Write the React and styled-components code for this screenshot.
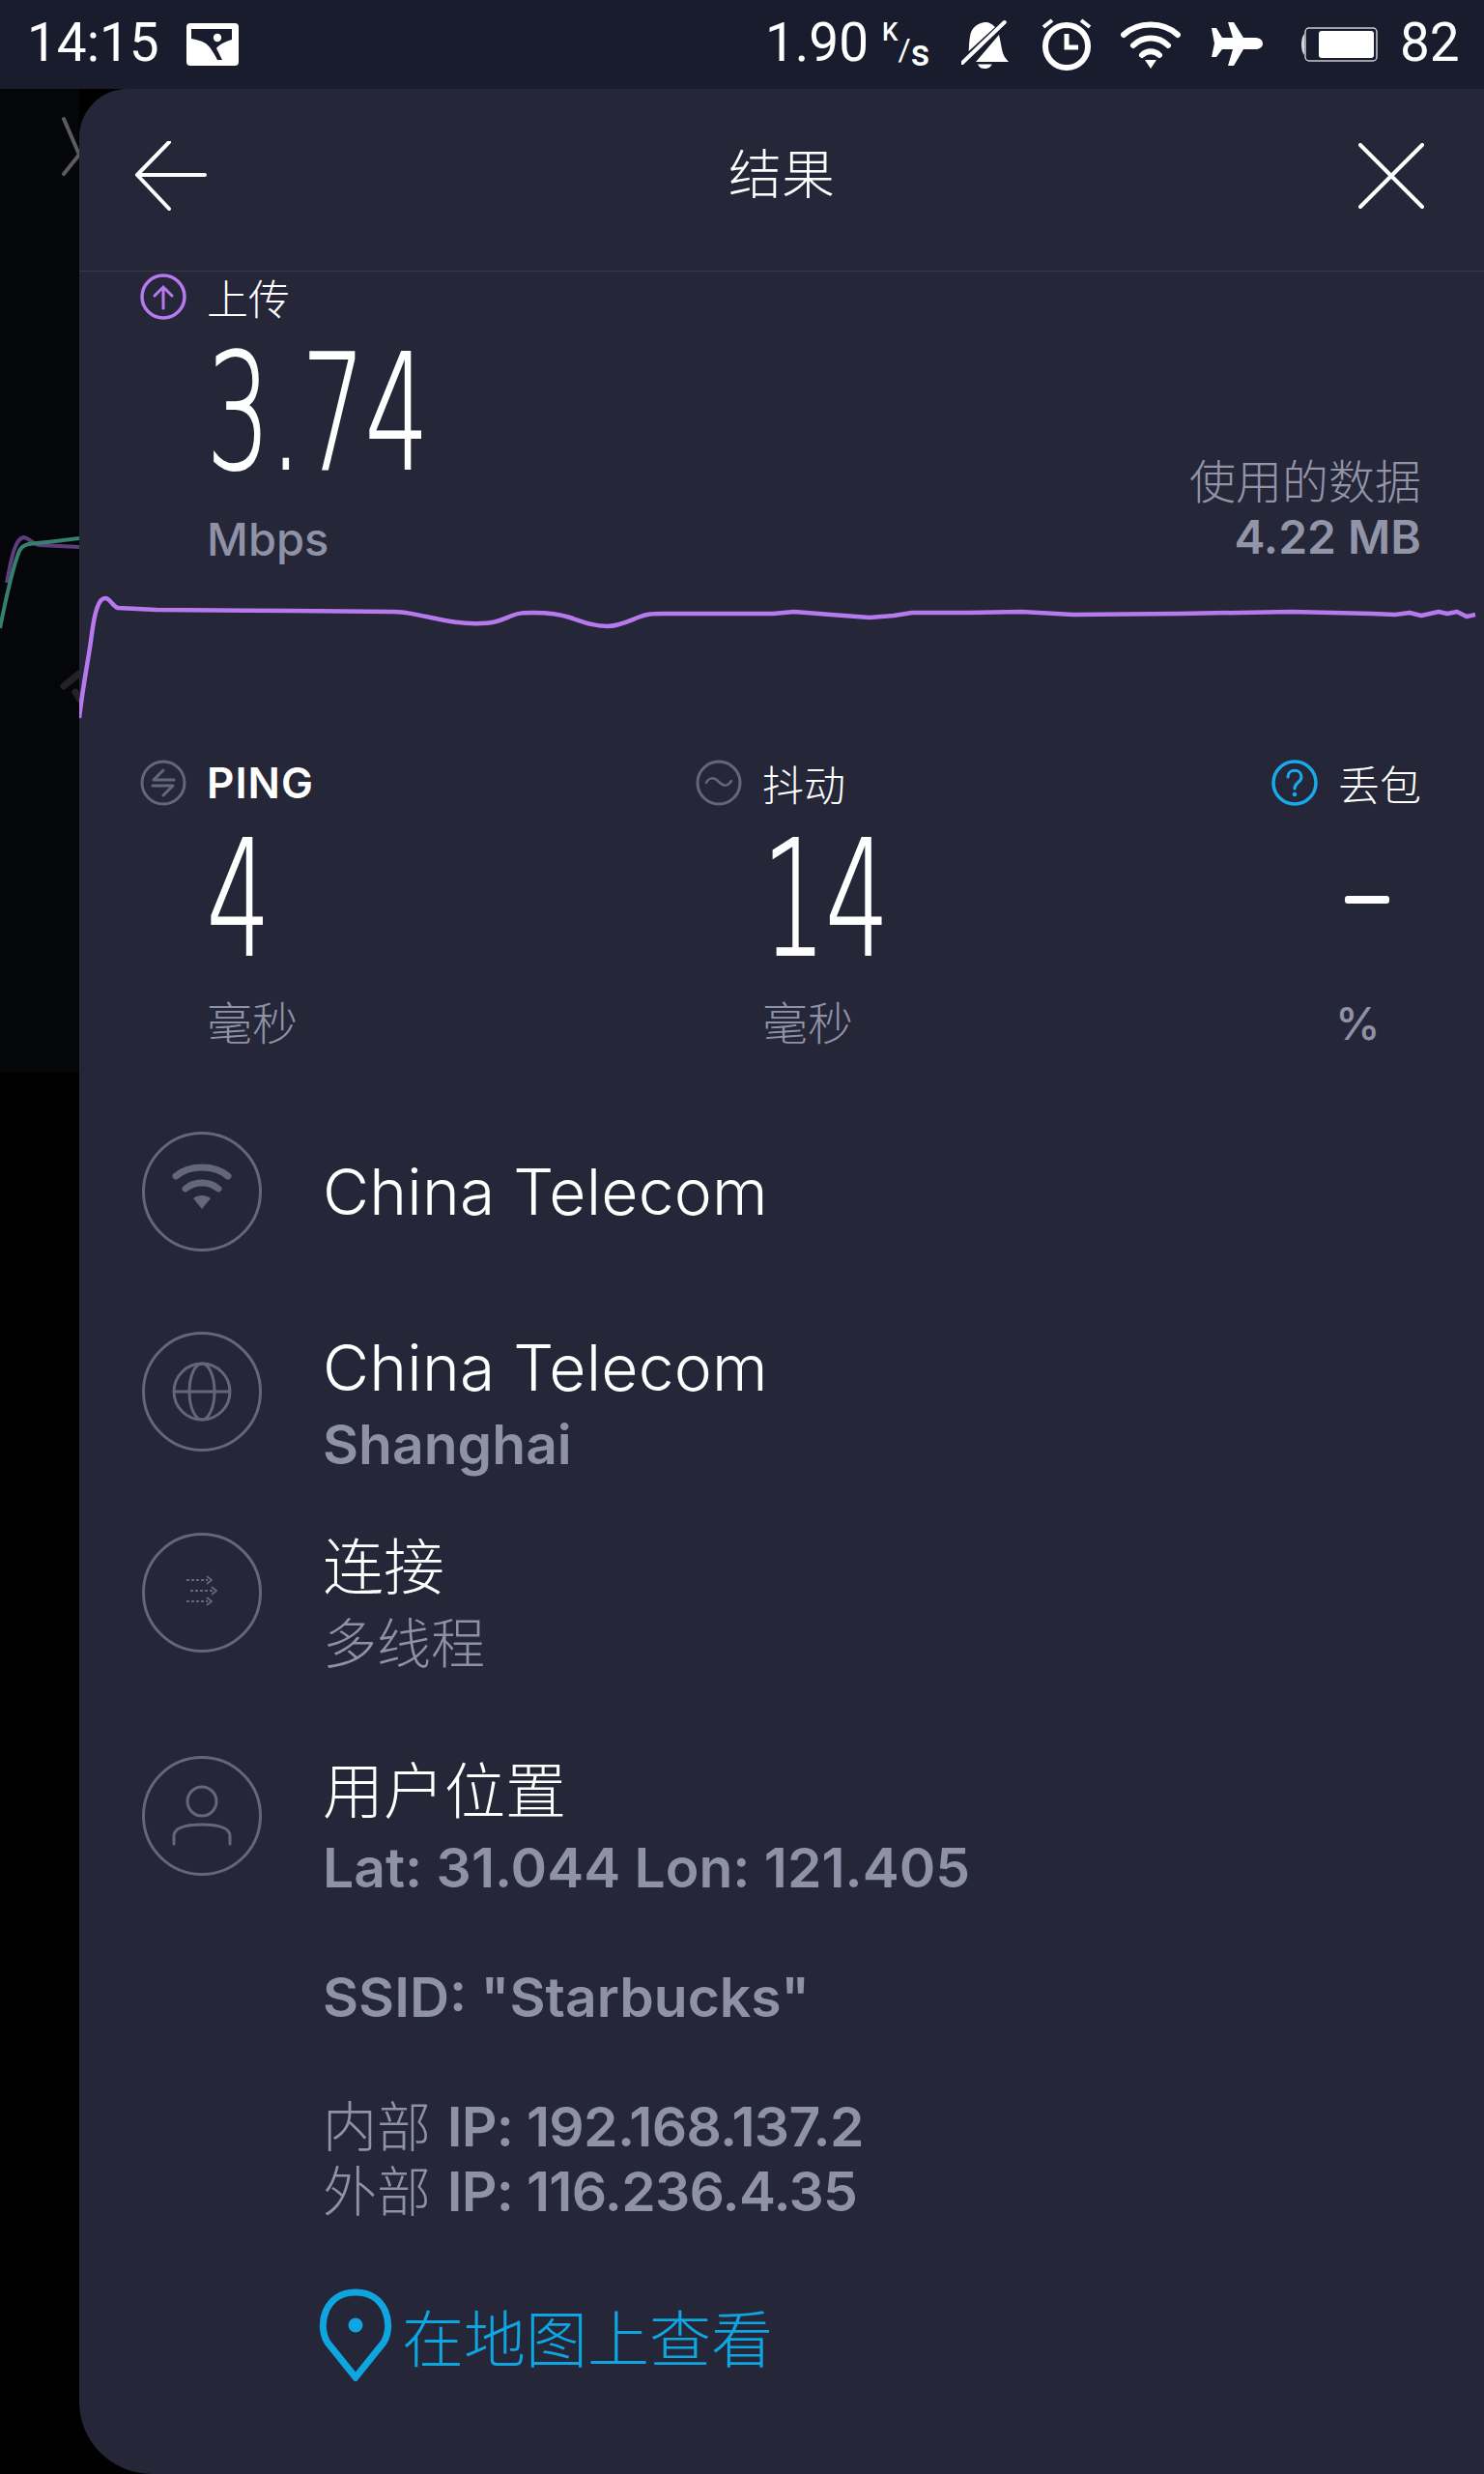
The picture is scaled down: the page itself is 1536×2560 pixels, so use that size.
import React from 'react';
import styled, { createGlobalStyle } from 'styled-components';

const Global = createGlobalStyle`
  html, body { margin: 0; padding: 0; background: #000; }
  * { box-sizing: border-box; }
`;
const CJK = `"Noto Sans CJK SC", sans-serif`;
const LATIN = `Inter, "Noto Sans CJK SC", sans-serif`;

const Screen = styled.div`
  width: 1536px; height: 2560px; overflow: hidden; background: #000;
  display: flex; flex-direction: column; color: #fff;
`;
const StatusBar = styled.div`
  height: 92px; flex: none; background: #191c2c;
  display: flex; align-items: center; padding: 0 27px 0 28px;
`;
const StatusText = styled.span`
  font: 400 56px/1 Roboto, sans-serif; color: #fff; display: inline-block;
  transform: scaleX(${p => p.$sx || 0.95}); transform-origin: left center;
  width: ${p => p.$w}px; white-space: nowrap; flex: none; margin-top: -4px;
`;
const StatusSlot = styled.div`
  flex: none; margin-left: ${p => p.$ml || 0}px; display: flex; align-items: center;
`;
const Spacer = styled.div` flex: 1; `;
const Rate = styled.div`
  display: flex; width: 50px; height: 42px; flex: none; margin: 0 0 3px 17px;
  font-family: Roboto, sans-serif; color: #fff;
`;
const RateK = styled.span` font-size: 26px; font-weight: 500; line-height: 18px; align-self: flex-start; `;
const RateSlash = styled.span` font-size: 32px; font-weight: 400; line-height: 32px; align-self: center; margin-top: 12px; `;
const RateS = styled.span` font-size: 38px; font-weight: 500; line-height: 22px; align-self: flex-end; `;
const Main = styled.div` flex: 1; display: flex; min-height: 0; background: #000; `;
const Strip = styled.div`
  width: 82px; flex: none; position: relative; height: 1018px; background: #050609;
`;
const GhostArt = styled.svg` position: absolute; left: 0; top: 0; `;
const Panel = styled.div`
  flex: 1; background: #252638; border-radius: 50px 0 0 75px; display: flex; flex-direction: column;
`;
const Header = styled.div`
  height: 189px; flex: none; border-bottom: 1px solid #373949; display: flex; align-items: center;
  justify-content: space-between; padding: 0 62px 9px 58px;
`;
const Title = styled.div`
  font: 300 55px/1 ${CJK}; color: #fff; margin: -10px 0 0 -2px;
`;
const Upload = styled.div`
  height: 505px; flex: none; display: flex; justify-content: space-between; padding: 2px 65px 0 63px;
`;
const SmallRow = styled.div`
  display: flex; align-items: center; gap: 21px; height: 48px;
`;
const Label = styled.span`
  font: ${p => (p.$latin ? `600 44px/1 ${LATIN}` : `300 43px/1 ${CJK}`)}; color: #fff; white-space: nowrap;
  letter-spacing: ${p => (p.$latin ? '1px' : '0')};
`;
const Big = styled.div`
  font: 200 165px/1 "DejaVu Sans", sans-serif; color: #fff; transform: scaleX(0.625); transform-origin: left center;
  -webkit-text-stroke: 2px #fff;
  height: 148px; display: flex; align-items: center; white-space: nowrap; margin: 23px 0 0 ${p => p.$ml || 69}px;
`;
const Unit = styled.div`
  font: ${p => (p.$cjk ? `300 47px/1 ${CJK}` : `500 47px/1 ${LATIN}`)}; color: #8f92a6; margin-left: ${p => p.$ml ?? 69}px;
  margin-top: ${p => p.$mt || 0}px; white-space: nowrap;
`;
const DataUsed = styled.div`
  margin-top: 184px; text-align: right; color: #9295a8;
`;
const DataLabel = styled.div` font: 300 48px/56px ${CJK}; `;
const DataValue = styled.div` font: 600 48px/56px ${LATIN}; margin-top: 5px; `;
const Chart = styled.svg` display: block; position: absolute; left: 0; top: 0; `;
const ChartLayer = styled.div` position: relative; height: 0; `;
const Metrics = styled.div`
  display: grid; grid-template-columns: 575px 1fr auto; padding: 0 65px 0 63px; flex: none; height: 385px;
`;
const Metric = styled.div` display: flex; flex-direction: column; `;
const Dash = styled.div`
  width: 46px; height: 8px; border-radius: 3px; background: #fff; margin: 93px 0 100px 76px;
`;
const List = styled.div` padding-left: 65px; `;
const Row = styled.div`
  display: flex; gap: 63px; height: ${p => p.$h}px; align-items: flex-start;
`;
const Circle = styled.div`
  width: 124px; height: 124px; border-radius: 50%; border: 3px solid #64677a; flex: none;
  display: flex; align-items: center; justify-content: center;
`;
const Texts = styled.div` padding-top: ${p => p.$pt || 0}px; `;
const RowTitle = styled.div`
  font: ${p => (p.$cjk ? `300 63px/60px ${CJK}` : `300 66px/66px ${LATIN}`)}; color: #fff; white-space: nowrap;
  margin-bottom: ${p => (p.$cjk ? 3 : 0)}px; letter-spacing: ${p => (p.$cjk ? 0 : 0.2)}px;
`;
const RowSub = styled.div`
  font: ${p => (p.$cjk ? `300 56px/66px ${CJK}` : `600 57px/66px ${LATIN}`)}; color: #8f92a6;
  margin-top: ${p => (p.$cjk ? 17 : 14)}px; white-space: nowrap;
`;
const InfoGroup = styled.div` margin-top: ${p => p.$mt}px; `;
const InfoLine = styled.div`
  font: 600 57px/67px ${LATIN}; color: #8f92a6; white-space: nowrap; height: 67px;
  letter-spacing: ${p => (p.$tight ? -0.7 : 0)}px;
`;
const Thin = styled.span` font: 300 56px/1 ${CJK}; margin-right: 3px; letter-spacing: 0; `;
const MapLink = styled.div`
  display: flex; align-items: center; gap: 10px; margin: 67px 0 0 -4px; color: #0ea5e0;
  font: 300 64px/95px ${CJK}; white-space: nowrap;
`;

const chart = "M82 742 C87 700 92 680 95 655 C98 632 102 618 109 618 C114 618 116 626 122 628 L162 630 L300 631 L407 632 C420 632 430 635 441 637 C465 642 480 645 498 644 C512 644 520 640 530 636 C538 633 542 633 552 633 C565 633 578 634 590 638 C605 643 615 647 628 647 C640 647 650 642 660 638 C670 634 675 634 685 634 L768 634 L800 634 L822 632 L860 635 L900 638 L925 636 L944 633 L1000 633 L1057 632 L1111 635 L1220 634 L1337 632 L1420 634 L1444 635 L1459 633 L1471 636 L1489 632 L1498 634 L1508 632 L1518 637 L1527 635";

const Icons = {
  Pic: () => (
    <svg width="54" height="44" viewBox="0 0 54 44">
      <rect x="0" y="0" width="54" height="44" rx="4" fill="#fff" />
      <path d="M5 6 H47 V17 C40 19 34 22 31 26 L37 38 H32 C28 30 24 24 20 21 C15 18 10 17 5 16Z" fill="#191c2c" />
      <circle cx="32" cy="15" r="4.2" fill="#fff" />
    </svg>
  ),
  Bell: () => (
    <svg width="52" height="52" viewBox="0 0 52 52">
      <path d="M35 8 C31 4 28 3 25 3 C15 4 10 10 9 18 C8 23 8 28 7.7 33Z" fill="#fff" />
      <path d="M39 16 C40 20 41 26 42 31 C43 37 46 41 49 44 H15Z" fill="#fff" />
      <path d="M17 46.5 H31.5 C31 49 28 51 24 51 C20 51 18 49 17 46.5Z" fill="#fff" />
      <path d="M1 45 L44.7 3" stroke="#fff" strokeWidth="4" strokeLinecap="round" />
    </svg>
  ),
  Alarm: () => (
    <svg width="52" height="54" viewBox="0 0 52 54">
      <circle cx="26" cy="29" r="22" fill="none" stroke="#fff" strokeWidth="6" />
      <path d="M26 16 V30 H38" fill="none" stroke="#fff" strokeWidth="5" />
      <path d="M2 9 L11 2 M50 9 L41 2" stroke="#fff" strokeWidth="4" />
    </svg>
  ),
  WifiS: () => (
    <svg width="62" height="52" viewBox="0 0 62 52">
      <g fill="none" stroke="#fff" strokeWidth="6" strokeLinecap="round">
        <path d="M3 16 C18 2 44 2 59 16" />
        <path d="M13 27 C23 17 39 17 49 27" />
        <path d="M22 37 C27 32 35 32 40 37" />
      </g>
      <path d="M25 42 H37 L31 51Z" fill="#fff" />
    </svg>
  ),
  Plane: () => (
    <svg width="54" height="48" viewBox="0 0 54 48">
      <path d="M54 23 C54 27 50 29 46 29 H34 L24 46 H18 L23 29 H12 L6 37 H1 L4 23 L1 7 H6 L12 17 H23 L18 1 H24 L34 17 H46 C50 17 54 19 54 23Z" fill="#fff" />
    </svg>
  ),
  Battery: () => (
    <svg width="82" height="38" viewBox="0 0 82 38">
      <path d="M6 8 C2 12 2 26 6 30Z" fill="#d8d8d8" />
      <rect x="7" y="2" width="74" height="34" rx="4" fill="none" stroke="#c9cad0" strokeWidth="1.5" />
      <rect x="21" y="5" width="57" height="28" rx="3" fill="#fff" />
    </svg>
  ),
  Back: () => (
    <svg width="74" height="72" viewBox="0 0 74 72">
      <path d="M35 1 L2 35 L35 70 M2 35 H72" fill="none" stroke="#fff" strokeWidth="4" strokeLinecap="round" strokeLinejoin="round" />
    </svg>
  ),
  Close: () => (
    <svg width="68" height="68" viewBox="0 0 68 68">
      <path d="M2 2 L66 66 M66 2 L2 66" fill="none" stroke="#fff" strokeWidth="4" strokeLinecap="round" />
    </svg>
  ),
  Up: () => (
    <svg width="48" height="48" viewBox="0 0 48 48" style={{ flex: 'none' }}>
      <circle cx="24" cy="24" r="22" fill="none" stroke="#b779ee" strokeWidth="3.5" />
      <path d="M24 36 V14 M15 23 L24 14 L33 23" fill="none" stroke="#b779ee" strokeWidth="3" strokeLinecap="round" />
    </svg>
  ),
  Ping: () => (
    <svg width="48" height="48" viewBox="0 0 48 48" style={{ flex: 'none' }}>
      <circle cx="24" cy="24" r="22" fill="none" stroke="#64677a" strokeWidth="3" />
      <path d="M35 21 H14 L24 11 M13 27 H34 L24 37" fill="none" stroke="#64677a" strokeWidth="3" strokeLinecap="round" strokeLinejoin="round" />
    </svg>
  ),
  Jitter: () => (
    <svg width="48" height="48" viewBox="0 0 48 48" style={{ flex: 'none' }}>
      <circle cx="24" cy="24" r="22" fill="none" stroke="#64677a" strokeWidth="3" />
      <path d="M11 24 C14 18 19 18 24 23 C29 28 33 28 37 22" fill="none" stroke="#64677a" strokeWidth="2.5" strokeLinecap="round" />
    </svg>
  ),
  Help: () => (
    <svg width="48" height="48" viewBox="0 0 48 48" style={{ flex: 'none' }}>
      <circle cx="24" cy="24" r="22" fill="none" stroke="#1aa9ea" strokeWidth="3.5" />
      <path d="M17 18 C17 9 31 9 31 18 C31 24 24 23 24 30" fill="none" stroke="#1aa9ea" strokeWidth="3.2" strokeLinecap="round" />
      <circle cx="24" cy="36" r="2.3" fill="#1aa9ea" />
    </svg>
  ),
  Wifi: () => (
    <svg width="64" height="52" viewBox="0 0 64 52" style={{ marginBottom: 10 }}>
      <g fill="none" stroke="#64677a" strokeLinecap="round">
        <path d="M5 15 C19 3 45 3 59 15" strokeWidth="7" />
        <path d="M15 28 C24 20 40 20 49 28" strokeWidth="7" />
      </g>
      <path d="M23 38 C28 34 36 34 41 38 L32 49Z" fill="#64677a" />
    </svg>
  ),
  Globe: () => (
    <svg width="62" height="62" viewBox="0 0 62 62" fill="none" stroke="#64677a" strokeWidth="3">
      <circle cx="31" cy="31" r="29" />
      <ellipse cx="31" cy="31" rx="13" ry="29" />
      <path d="M2 31 H60" />
    </svg>
  ),
  Threads: () => (
    <svg width="34" height="32" viewBox="0 0 34 32" fill="none" stroke="#64677a" strokeWidth="1.8" style={{ marginBottom: 4 }}>
      <path d="M1 5 H23" strokeDasharray="3 2" /><path d="M22 1 L27 5 L22 9" />
      <path d="M5 16 H28" strokeDasharray="3 2" /><path d="M27 12 L32 16 L27 20" />
      <path d="M1 27 H23" strokeDasharray="3 2" /><path d="M22 23 L27 27 L22 31" />
    </svg>
  ),
  User: () => (
    <svg width="64" height="64" viewBox="0 0 64 64" fill="none" stroke="#64677a" strokeWidth="3">
      <circle cx="32" cy="17" r="15" />
      <path d="M3 61 V53 C3 45 12 41 32 41 C52 41 61 45 61 53 V61" strokeLinecap="round" />
    </svg>
  ),
  Pin: () => (
    <svg width="76" height="96" viewBox="0 0 76 96" style={{ flex: 'none' }}>
      <path d="M38 92 L9 56 C-2 38 6 4 38 4 C70 4 78 38 67 56Z" fill="none" stroke="#0ea5e0" strokeWidth="7" strokeLinejoin="miter" />
      <circle cx="38" cy="38" r="7.5" fill="#0ea5e0" />
    </svg>
  ),
};

export default function App() {
  return (
    <Screen>
      <Global />
      <StatusBar>
        <StatusText $w={140} $sx={0.98}>14:15</StatusText>
        <StatusSlot $ml={25}><Icons.Pic /></StatusSlot>
        <Spacer />
        <StatusText $w={104} $sx={0.98}>1.90</StatusText>
        <Rate><RateK>K</RateK><RateSlash>/</RateSlash><RateS>s</RateS></Rate>
        <StatusSlot $ml={32}><Icons.Bell /></StatusSlot>
        <StatusSlot $ml={31}><Icons.Alarm /></StatusSlot>
        <StatusSlot $ml={30}><Icons.WifiS /></StatusSlot>
        <StatusSlot $ml={31}><Icons.Plane /></StatusSlot>
        <StatusSlot $ml={37}><Icons.Battery /></StatusSlot>
        <StatusSlot $ml={23}><StatusText $w={60} $sx={0.98}>82</StatusText></StatusSlot>
      </StatusBar>
      <Main>
        <Strip>
          <GhostArt width="82" height="1018" viewBox="0 92 82 1018">
            <path d="M66 123 L82 160 L66 180" fill="none" stroke="#5c5c5c" strokeWidth="4" strokeLinecap="round" />
            <path d="M7 603 C12 575 16 558 24 556 C30 556 32 562 40 564 L82 566" fill="none" stroke="#5d3d7c" strokeWidth="4" />
            <path d="M0 650 C6 620 14 585 20 570 C24 562 30 563 49 561 L82 557" fill="none" stroke="#36806f" strokeWidth="4" />
            <path d="M66 710 L82 697 M82 723 L78 716" fill="none" stroke="#232323" strokeWidth="7" strokeLinecap="round" />
          </GhostArt>
        </Strip>
        <Panel>
          <Header>
            <Icons.Back />
            <Title>结果</Title>
            <Icons.Close />
          </Header>
          <ChartLayer>
            <Chart width="1454" height="500" viewBox="82 280 1454 500">
              <path d={chart} fill="none" stroke="#b779ee" strokeWidth="4.5" strokeLinejoin="round" />
            </Chart>
          </ChartLayer>
          <Upload>
            <div>
              <SmallRow><Icons.Up /><Label>上传</Label></SmallRow>
              <Big>3.74</Big>
              <Unit $mt={32}>Mbps</Unit>
            </div>
            <DataUsed>
              <DataLabel>使用的数据</DataLabel>
              <DataValue>4.22 MB</DataValue>
            </DataUsed>
          </Upload>
          <Metrics>
            <Metric>
              <SmallRow><Icons.Ping /><Label $latin>PING</Label></SmallRow>
              <Big>4</Big>
              <Unit $cjk $mt={27}>毫秒</Unit>
            </Metric>
            <Metric>
              <SmallRow><Icons.Jitter /><Label>抖动</Label></SmallRow>
              <Big>14</Big>
              <Unit $cjk $mt={27}>毫秒</Unit>
            </Metric>
            <Metric>
              <SmallRow><Icons.Help /><Label>丢包</Label></SmallRow>
              <Dash />
              <Unit $ml={66}>%</Unit>
            </Metric>
          </Metrics>
          <List>
            <Row $h={207}>
              <Circle><Icons.Wifi /></Circle>
              <Texts $pt={29}><RowTitle>China Telecom</RowTitle></Texts>
            </Row>
            <Row $h={208}>
              <Circle><Icons.Globe /></Circle>
              <Texts $pt={4}>
                <RowTitle>China Telecom</RowTitle>
                <RowSub>Shanghai</RowSub>
              </Texts>
            </Row>
            <Row $h={231}>
              <Circle><Icons.Threads /></Circle>
              <Texts $pt={1}>
                <RowTitle $cjk>连接</RowTitle>
                <RowSub $cjk>多线程</RowSub>
              </Texts>
            </Row>
            <Row $h={600}>
              <Circle><Icons.User /></Circle>
              <Texts $pt={2}>
                <RowTitle $cjk>用户位置</RowTitle>
                <InfoGroup $mt={20}><InfoLine>Lat: 31.044 Lon: 121.405</InfoLine></InfoGroup>
                <InfoGroup $mt={67}><InfoLine>SSID: "Starbucks"</InfoLine></InfoGroup>
                <InfoGroup $mt={67}>
                  <InfoLine $tight><Thin>内部</Thin> IP: 192.168.137.2</InfoLine>
                  <InfoLine $tight><Thin>外部</Thin> IP: 116.236.4.35</InfoLine>
                </InfoGroup>
                <MapLink><Icons.Pin />在地图上查看</MapLink>
              </Texts>
            </Row>
          </List>
        </Panel>
      </Main>
    </Screen>
  );
}
